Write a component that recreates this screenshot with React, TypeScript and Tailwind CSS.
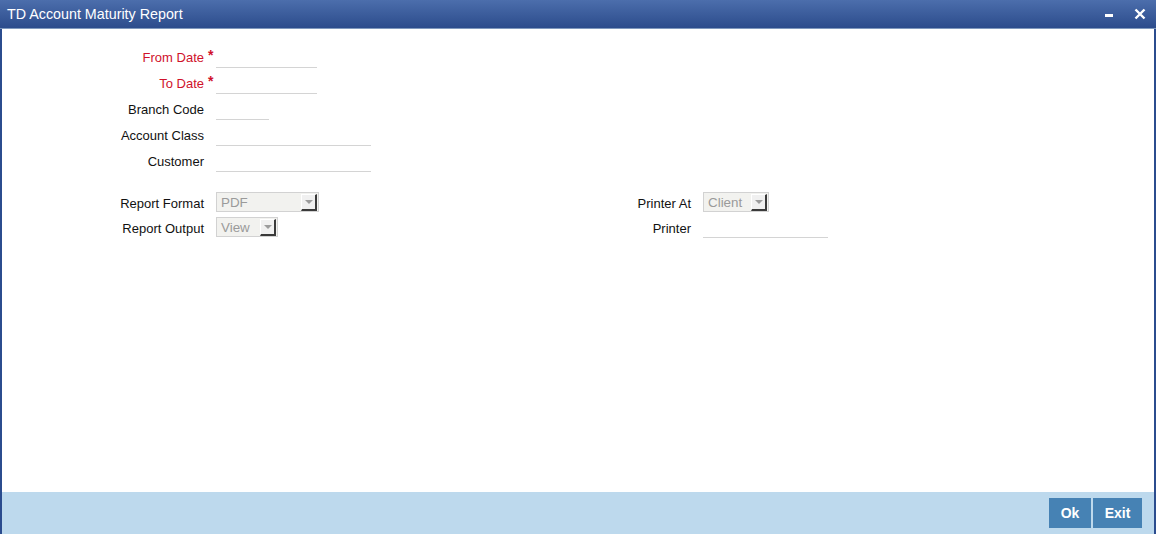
import React from 'react'

const font = { fontFamily: '"Liberation Sans", Arial, sans-serif' }

type FieldProps = { label: string; width: string; required?: boolean }

const Field = ({ label, width, required }: FieldProps) => (
  <div className="flex h-[26px] items-start">
    <div className={`w-[202px] pt-[6px] text-right text-[13px] leading-[16px] ${required ? 'text-[#d0112b]' : 'text-[#111]'}`}>
      {label}
    </div>
    <div className="relative w-[12px]">
      {required ? <span className="absolute left-[4px] top-[4px] text-[14px] font-bold leading-[14px] text-[#d0112b]">*</span> : null}
    </div>
    <div className={`h-[24px] border-b border-[#d4d4d4] ${width}`} />
  </div>
)

const Select = ({ value, width }: { value: string; width: string }) => (
  <div className={`mt-[1px] flex h-[20px] items-center justify-between border border-[#d2d2d2] bg-[#f2f2ef] pl-[4px] pr-[1px] ${width}`}>
    <span className="pt-[1px] text-[13.4px] leading-[16px] text-[#9a9a9a]">{value}</span>
    <span className="flex h-[17px] w-[16px] items-center justify-center border-b-2 border-r-2 border-l border-t border-b-[#3a3a3a] border-r-[#3a3a3a] border-l-white border-t-white bg-[#f0f0f0]">
      <span className="h-0 w-0 border-x-[4px] border-t-[4px] border-x-transparent border-t-[#9c9c9c]" />
    </span>
  </div>
)

const Row = ({ label, labelWidth, children }: { label: string; labelWidth: string; children: React.ReactNode }) => (
  <div className="flex h-[25px] items-start">
    <div className={`pt-[5px] text-right text-[13px] leading-[16px] text-[#111] ${labelWidth}`}>{label}</div>
    <div className="w-[12px]" />
    {children}
  </div>
)

export default function App() {
  return (
    <div className="h-[541px] w-[1156px] bg-white" style={font}>
      <div className="flex h-[534px] flex-col border-x-2 border-[#2b4c8e]">
        <div className="-mx-[2px] flex h-[29px] items-center justify-between border-b border-[#7f98bd] bg-gradient-to-b from-[#4c6eac] to-[#2c4c8c] pl-[7px] pr-[10px]">
          <span className="text-[14.3px] leading-[16px] text-white">TD Account Maturity Report</span>
          <div className="flex items-center gap-[20px]">
            <svg width="10" height="10" viewBox="0 0 10 10">
              <rect x="1" y="5" width="8" height="3" fill="white" />
            </svg>
            <svg width="12" height="12" viewBox="0 0 12 12">
              <path d="M1.5 1.5 L10.5 10.5 M10.5 1.5 L1.5 10.5" stroke="white" strokeWidth="2.4" />
            </svg>
          </div>
        </div>

        <div className="flex-1 pt-[15px]">
          <Field label="From Date" width="w-[101px]" required />
          <Field label="To Date" width="w-[101px]" required />
          <Field label="Branch Code" width="w-[53px]" />
          <Field label="Account Class" width="w-[155px]" />
          <Field label="Customer" width="w-[155px]" />

          <div className="mt-[17px] flex">
            <div className="w-[489px]">
              <Row label="Report Format" labelWidth="w-[202px]">
                <Select value="PDF" width="w-[103px]" />
              </Row>
              <Row label="Report Output" labelWidth="w-[202px]">
                <Select value="View" width="w-[62px]" />
              </Row>
            </div>
            <div>
              <Row label="Printer At" labelWidth="w-[200px]">
                <Select value="Client" width="w-[66px]" />
              </Row>
              <Row label="Printer" labelWidth="w-[200px]">
                <div className="h-[22px] w-[125px] border-b border-[#d4d4d4]" />
              </Row>
            </div>
          </div>
        </div>

        <div className="flex h-[42px] items-center justify-end gap-[2px] bg-[#bdd9ed] pr-[12px]">
          <button className="h-[30px] w-[42px] bg-[#4682b4] text-[14px] font-bold text-white">Ok</button>
          <button className="h-[30px] w-[49px] bg-[#4682b4] text-[14px] font-bold text-white">Exit</button>
        </div>
      </div>
    </div>
  )
}
